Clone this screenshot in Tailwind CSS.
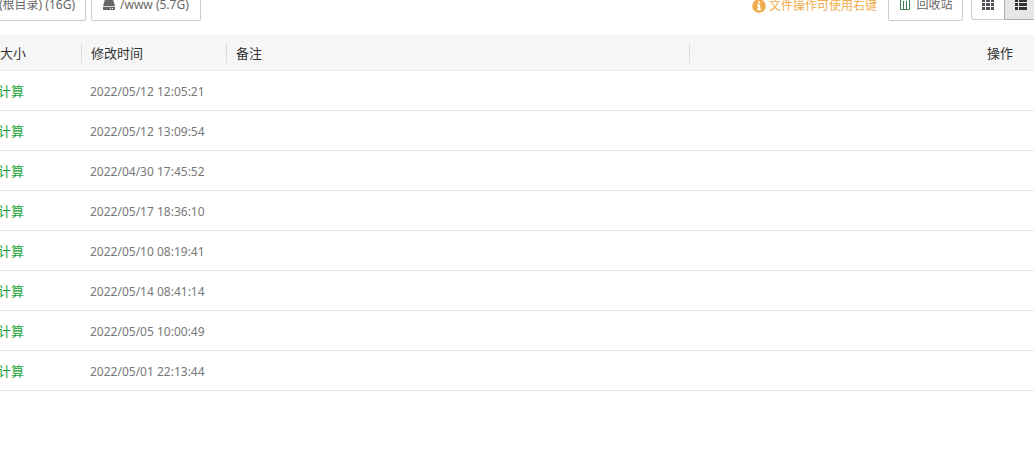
<!DOCTYPE html>
<html lang="zh-CN">
<head>
  <meta charset="UTF-8">
  <meta name="viewport" content="width=device-width, initial-scale=1.0">
  <title>文件管理</title>
  <script src="https://cdn.jsdelivr.net/npm/@tailwindcss/browser@4"></script>
</head>
<body class="bg-white overflow-x-hidden font-['Noto_Sans','Noto_Sans_CJK_SC',sans-serif] text-xs text-[#666]">
  <div class="overflow-hidden">
    <!-- Toolbar -->
    <div class="flex justify-between items-start -mt-[11px] -mx-[9px]">
      <div class="flex gap-[5px]">
        <button class="h-8 w-[95px] pr-[10px] flex items-center justify-end border border-[#ccc] rounded-xs whitespace-nowrap">(根目录) (16G)</button>
        <button class="h-8 w-[110px] pl-[10px] flex items-center gap-1 border border-[#ccc] rounded-xs whitespace-nowrap">
          <svg class="w-[14px] h-[14px]" viewBox="0 0 14 14" fill="#666" aria-hidden="true">
            <path d="M3.4 0h7.2L13 8.2H1z"/>
            <path fill-rule="evenodd" d="M1 9h12v3H1zM8 10v1h1v-1zM10 10v1h1v-1z"/>
          </svg>
          /www (5.7G)
        </button>
      </div>

      <div class="flex items-start">
        <div class="h-[34px] mr-[11px] flex items-center gap-[3px] text-[#f0ad4e] whitespace-nowrap">
          <svg class="w-[14px] h-[14px]" viewBox="0 0 14 14" aria-hidden="true">
            <circle cx="7" cy="7" r="6.8" fill="#f0ad4e"/>
            <path fill="#fff" d="M6 2.4h2.2v1.9H6zM5 5.4h3.2v4.3H9v1.5H5V9.7h1V6.9H5z"/>
          </svg>
          文件操作可使用右键
        </div>
        <button class="h-8 w-[75px] mr-2 flex items-center justify-center gap-1 border border-[#ccc] rounded-xs whitespace-nowrap">
          <svg class="w-[14px] h-[14px]" viewBox="0 0 14 14" fill="none" stroke="#3f7f4f" aria-hidden="true">
            <path d="M1 1.5h12M5 1.5v-1h4v1M2.5 2v9.5h9V2M5.5 3v8M8.5 3v8"/>
          </svg>
          回收站
        </button>
        <div class="flex">
          <button class="w-[33px] h-[31px] flex items-center justify-center border border-r-0 border-[#ccc] rounded-l-[3px]" aria-label="图标视图">
            <svg class="w-3 h-3" viewBox="0 0 12 12" fill="#554f58" aria-hidden="true">
              <path d="M0 1h3v2H0zM4 1h4v2H4zM9 1h3v2H9zM0 4h3v3H0zM4 4h4v3H4zM9 4h3v3H9zM0 8h3v3H0zM4 8h4v3H4zM9 8h3v3H9z"/>
            </svg>
          </button>
          <button class="w-[39px] h-[31px] pl-[10px] flex items-center border border-[#adadad] bg-[#e6e6e6] rounded-r-[3px]" aria-label="列表视图">
            <svg class="w-3 h-3" viewBox="0 0 12 12" fill="#333" aria-hidden="true">
              <path d="M0 1h3v2H0zM4 1h8v2H4zM0 4h3v3H0zM4 4h8v3H4zM0 8h3v3H0zM4 8h8v3H4z"/>
            </svg>
          </button>
        </div>
      </div>
    </div>

    <!-- File list -->
    <div class="mt-3 -ml-[9px]">
      <table class="w-full table-fixed border-collapse text-left">
        <colgroup>
          <col class="w-[91px]">
          <col class="w-[145px]">
          <col class="w-[463px]">
          <col>
        </colgroup>
        <thead class="bg-[#f6f6f6] text-[13px] text-[#333]">
          <tr class="h-[35px] border-b border-[#e8e8e8]">
            <th class="pt-[2px] px-0 pb-0 font-normal"><div class="h-5 pl-[9px] leading-5 border-r border-[#ddd]">大小</div></th>
            <th class="pt-[2px] px-0 pb-0 font-normal"><div class="h-5 pl-[9px] leading-5 border-r border-[#ddd]">修改时间</div></th>
            <th class="pt-[2px] px-0 pb-0 font-normal"><div class="h-5 pl-[9px] leading-5 border-r border-[#ddd]">备注</div></th>
            <th class="pt-[2px] px-0 pb-0 font-normal text-right"><div class="h-5 pr-[21px] leading-5">操作</div></th>
          </tr>
        </thead>
        <tbody id="file-list"></tbody>
      </table>
    </div>
  </div>

  <script>
    const fileList = document.getElementById("file-list");

    const times = [
      "2022/05/12 12:05:21", "2022/05/12 13:09:54", "2022/04/30 17:45:52", "2022/05/17 18:36:10",
      "2022/05/10 08:19:41", "2022/05/14 08:41:14", "2022/05/05 10:00:49", "2022/05/01 22:13:44"
    ];

    times.forEach(time => {
      fileList.innerHTML += `
        <tr class="h-10 border-b border-[#e8e8e8]">
          <td class="pt-1 pb-0 pl-[7px]"><a href="#" class="text-[13px] text-[#20a53a]">计算</a></td>
          <td class="pt-1 pb-0 pl-2 text-[#777] whitespace-nowrap">${time}</td>
          <td></td>
          <td></td>
        </tr>`;
    });
  </script>
</body>
</html>
